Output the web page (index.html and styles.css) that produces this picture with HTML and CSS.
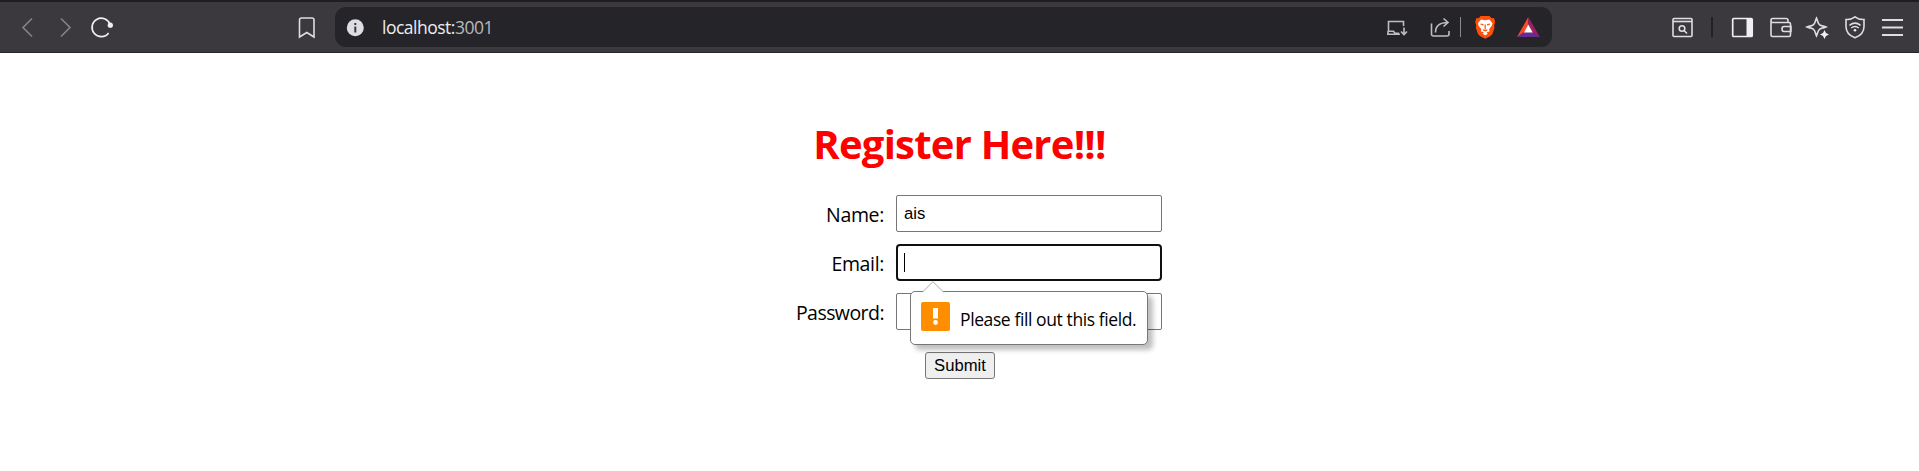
FILE: index.html
```html
<!DOCTYPE html>
<html lang="en">
<head>
<meta charset="utf-8">
<title>Register</title>
<link rel="stylesheet" href="styles.css">
</head>
<body>
<header class="toolbar">
  <nav class="nav">
    <svg class="icon dim" viewBox="0 0 24 24"><path d="M16 3.5 7 12.5l9 9"/></svg>
    <svg class="icon dim" viewBox="0 0 24 24"><path d="M7 3.5l9 9-9 9"/></svg>
    <svg class="icon bright reload" viewBox="0 0 24 24"><path d="M20 9.500A9.200 9.200 0 1 0 18.600 18"/><circle class="solid" cx="20.300" cy="10.200" r="2.600"/></svg>
  </nav>
  <svg class="icon bookmark" viewBox="0 0 24 24"><path d="M4.500 22V5q0-2 2-2h10.500q2 0 2 2v17l-7.200-4.500z"/></svg>
  <div class="address">
    <svg class="icon info" viewBox="0 0 24 24"><circle class="solid" cx="12.300" cy="12.800" r="8.500"/><path class="info-i" d="M12.300 11.500v6M12.300 8v2"/></svg>
    <span class="url">localhost:<span class="port">3001</span></span>
    <svg class="icon soft install" viewBox="0 0 24 24"><path d="M18.500 11V6.500H3.500V16M2 19.300h13M3 16v3.300M3 16.200h5.500l1.500 2h4M19 12.500v7M16 16.500l3 3 3-3"/></svg>
    <svg class="icon soft share" viewBox="0 0 24 24"><path d="M2.500 8.500v10.500q0 2 2 2h13.500q2 0 2-2v-3M6.500 17.500C6.500 11 10 7.500 19 7.500M14.500 3.500l4.500 4-4.500 4"/></svg>
    <span class="rule"></span>
    <svg class="icon brave" viewBox="0 0 24 24"><path fill="#ff4f0a" d="M7.500 1h9l2.200 2.200 2.300-.2 1.200 4-1 3.200.3 2.800-2.200 6.200-2.500 2.200L12.200 23.700l-4.600-2.300-2.500-2.200-2.200-6.200.3-2.800-1-3.200 1.200-4 2.300.2z"/><path fill="#fff" d="M8 4.500 12.200 5.300l4.200-.8 3.100 3.800-.7 2.500-2.700 3.500.5 2.200-2.300.6-2.100 2-2.100-2-2.300-.6.500-2.200-2.700-3.500-.7-2.500zM9.500 18.500l2.700-1.400 2.700 1.400-2.700 2z"/><path class="face" d="M7.500 9l3 .8M17 9l-3 .8M12.200 9.500v5M10 14.700l2.200 1.200 2.200-1.200"/></svg>
    <svg class="icon bat" viewBox="0 0 24 24"><path fill="#ff4724" d="M12.300 2 1 22l8-5 3.300-7z"/><path fill="#9e1f63" d="M12.300 2v8l3.500 7 8 5z"/><path fill="#662d91" d="M1 22h22.800l-7-5H8z"/><path fill="#fff" d="M12.300 9.500 8 17.500h8.700z"/></svg>
  </div>
  <div class="tools">
    <svg class="icon" viewBox="0 0 24 24"><rect x="3" y="3.500" width="19" height="18" rx="1"/><path d="M3 6.500h19"/><circle cx="12" cy="13.500" r="2.800"/><path d="M14 15.500l3 3"/></svg>
    <span class="divider"></span>
    <svg class="icon bright side" viewBox="0 0 24 24"><rect x="2.700" y="3.500" width="19.500" height="18" rx="1"/><path class="solid" d="M16.500 3.500h5.500v18h-5.500z"/></svg>
    <svg class="icon wallet" viewBox="0 0 24 24"><path d="M2 6V20q0 1.500 1.500 1.500h16.500q1.500 0 1.500-1.500V9q0-1.500-1.500-1.500H3.500Q2 7.500 2 5.500t1.500-2H17q2 0 2 2v2M22 11.500h-7q-2 0-2 2.500t2 2.500h7z"/></svg>
    <svg class="icon spark" viewBox="0 0 24 24"><path d="M10.500 3c1 2 1.300 5.500 3.200 6.800 1.300 1.200 4 1.200 6.300 2.200-2.300 1-5 1-6.300 2.200-1.900 1.300-2.200 4.800-3.200 6.800-1-2-1.300-5.500-3.200-6.800C6 13 3.300 13 1 12c2.300-1 5-1 6.300-2.200C9.200 8.500 9.500 5 10.500 3z"/><path class="knock" d="M18.500 15.500v8M14.500 19.500h8"/><path class="solid" d="M18.500 15l1.500 3 3 1.500-3 1.500-1.500 3-1.500-3-3-1.500 3-1.500z"/></svg>
    <svg class="icon vpn" viewBox="0 0 24 24"><path d="M12 1.800q4 3 9 2.700v7q0 8-9 11.300-9-3.300-9-11.300v-7q5 .3 9-2.700z"/><path d="M6.500 10.300q5.500-4.500 11 0M8.300 13q3.700-3 7.400 0"/><circle class="solid" cx="12" cy="15.300" r="1.300"/></svg>
    <svg class="icon menu" viewBox="0 0 24 24"><path d="M1 5h21M1 12.500h21M1 20h21"/></svg>
  </div>
</header>
<main class="page">
  <h1 class="title">Register Here!!!</h1>
  <form class="form" novalidate>
    <div class="row"><label class="label name" for="name">Name:</label><input class="field" id="name" type="text" value="ais"></div>
    <div class="row">
      <label class="label email" for="email">Email:</label>
      <div class="anchor">
        <div class="field focused" id="email"><span class="caret"></span></div>
        <div class="bubble" role="alert">
          <svg class="pointer" viewBox="0 0 22 12"><path d="M.5 11 11 .7 21.500 11v1H.5z" fill="#fff"/><path d="M.5 11 11 .7 21.500 11" fill="none" stroke="#aaa"/></svg>
          <svg class="warn" viewBox="0 0 29 29"><rect width="29" height="29" rx="2" fill="#ff8d00"/><path d="M12 6h5v10.500h-5z" fill="#fff"/><circle cx="14.500" cy="20.500" r="2.400" fill="#fff"/></svg>
          <span class="message">Please fill out this field.</span>
        </div>
      </div>
    </div>
    <div class="row"><label class="label password" for="password">Password:</label><input class="field" id="password" type="password"></div>
    <button class="submit" type="button">Submit</button>
  </form>
</main>
</body>
</html>
```
FILE: styles.css
```css
* { box-sizing: border-box; }
body { margin: 0; background: #fff; color: #000; font-family: "Open Sans", "Noto Sans", sans-serif; }

.toolbar { display: flex; align-items: center; height: 53px; padding-left: 16px; background: #3b393e; border-top: 2px solid #1f1d22; border-bottom: 1px solid #29272c; }
.icon { display: block; flex: none; width: 24px; height: 24px; fill: none; stroke: #dedde1; stroke-width: 1.6; overflow: visible; }
.icon .solid { fill: #f0eff3; stroke: none; }
.dim { stroke: #858388; }
.bright { stroke: #f0eff3; stroke-width: 1.7; }
.soft { stroke: #bfbdc2; }
.nav { display: flex; gap: 14px; }
.reload { margin-left: -2px; }
.bookmark { margin-left: 181px; }
.address { display: flex; align-items: center; width: 1217px; height: 40px; margin-left: 16px; padding-left: 8px; background: #252429; border-radius: 11px; }
.info .solid { fill: #dedde3; }
.info .info-i { stroke: #3b393e; stroke-width: 2; }
.url { width: 130px; margin: -1px 0 0 15px; font-size: 17.5px; line-height: 24px; letter-spacing: -.5px; color: #ececf0; white-space: nowrap; }
.port { color: #b9b8bd; }
.install { margin-left: 873px; }
.share { margin-left: 20px; }
.rule { width: 1px; height: 20px; margin-left: 7px; background: #8b898f; }
.brave { margin-left: 12px; stroke: none; }
.brave .face { stroke: #ff4f0a; stroke-width: 1.2; }
.bat { margin-left: 19px; stroke: none; }
.tools { display: flex; align-items: center; margin-left: 118px; }
.divider { width: 2px; height: 20px; margin-left: 17px; background: #222126; }
.side { margin-left: 17px; }
.wallet { margin-left: 15px; }
.spark { margin-left: 13px; }
.spark .knock { stroke: #3b393e; stroke-width: 4; }
.vpn { margin-left: 13px; }
.menu { margin-left: 14px; stroke-width: 1.8; }

.page { display: flex; flex-direction: column; align-items: center; padding-top: 64px; }
.title { margin: 0; font-size: 40px; line-height: 54px; font-weight: 700; color: #f00; white-space: nowrap; letter-spacing: -.77px; }
.form { display: flex; flex-direction: column; gap: 12px; width: 405px; margin-top: 24px; }
.row { display: flex; align-items: center; justify-content: flex-end; gap: 12px; height: 37px; }
.label { padding-top: 1px; font-size: 19.5px; line-height: 27px; white-space: nowrap; letter-spacing: -.35px; }
.password { letter-spacing: -.55px; }
.field { display: block; flex: none; width: 266px; height: 37px; margin: 0; padding: 0 7px; border: 1px solid #767676; border-radius: 2px; background: #fff; font: 16.67px/20px "Liberation Sans", Arial, sans-serif; }
.focused { padding: 7px 6px; border: 2px solid #101010; border-radius: 4px; }
.caret { display: block; width: 1px; height: 19px; background: #000; }
.anchor { position: relative; }
.bubble { position: absolute; top: 47px; left: 14px; z-index: 1; display: flex; align-items: center; gap: 10px; width: 238px; height: 54px; padding: 0 0 4px 10px; border: 1px solid #777; border-radius: 5px; background: #fff; box-shadow: 5px 5px 5px rgba(0,0,0,.25); }
.pointer { position: absolute; top: -11px; left: 11px; width: 22px; height: 12px; }
.warn { flex: none; width: 29px; height: 29px; }
.message { padding-top: 5px; font-size: 17.5px; line-height: 24px; white-space: nowrap; letter-spacing: -.4px; }
.submit { align-self: flex-start; width: 70px; height: 27px; margin: 10px 0 0 168px; padding: 0; border: 1px solid #767676; border-radius: 3px; background: #efefef; color: #000; font: 16.67px/20px "Liberation Sans", Arial, sans-serif; }
```
